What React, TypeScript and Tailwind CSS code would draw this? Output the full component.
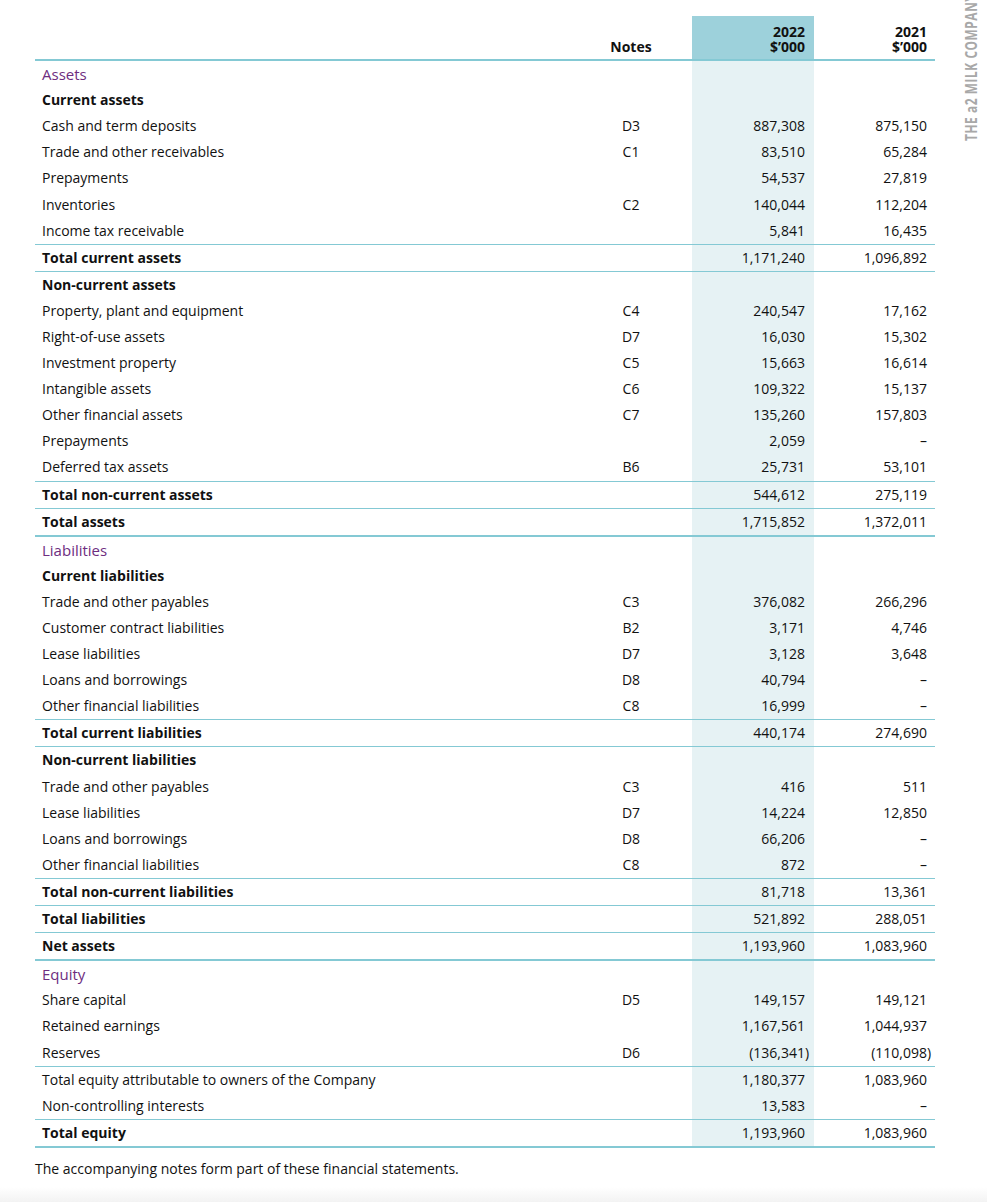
import React from "react";

type Row = {
  l: string;
  t?: "sec" | "bold";
  n?: string;
  a?: string;
  b?: string;
  line?: 0 | 1 | 2;
};

const rows: Row[] = [
  { l: "Assets", t: "sec" },
  { l: "Current assets", t: "bold" },
  { l: "Cash and term deposits", n: "D3", a: "887,308", b: "875,150" },
  { l: "Trade and other receivables", n: "C1", a: "83,510", b: "65,284" },
  { l: "Prepayments", a: "54,537", b: "27,819" },
  { l: "Inventories", n: "C2", a: "140,044", b: "112,204" },
  { l: "Income tax receivable", a: "5,841", b: "16,435", line: 1 },
  { l: "Total current assets", t: "bold", a: "1,171,240", b: "1,096,892", line: 1 },
  { l: "Non-current assets", t: "bold" },
  { l: "Property, plant and equipment", n: "C4", a: "240,547", b: "17,162" },
  { l: "Right-of-use assets", n: "D7", a: "16,030", b: "15,302" },
  { l: "Investment property", n: "C5", a: "15,663", b: "16,614" },
  { l: "Intangible assets", n: "C6", a: "109,322", b: "15,137" },
  { l: "Other financial assets", n: "C7", a: "135,260", b: "157,803" },
  { l: "Prepayments", a: "2,059", b: "–" },
  { l: "Deferred tax assets", n: "B6", a: "25,731", b: "53,101", line: 1 },
  { l: "Total non-current assets", t: "bold", a: "544,612", b: "275,119", line: 1 },
  { l: "Total assets", t: "bold", a: "1,715,852", b: "1,372,011", line: 2 },
  { l: "Liabilities", t: "sec" },
  { l: "Current liabilities", t: "bold" },
  { l: "Trade and other payables", n: "C3", a: "376,082", b: "266,296" },
  { l: "Customer contract liabilities", n: "B2", a: "3,171", b: "4,746" },
  { l: "Lease liabilities", n: "D7", a: "3,128", b: "3,648" },
  { l: "Loans and borrowings", n: "D8", a: "40,794", b: "–" },
  { l: "Other financial liabilities", n: "C8", a: "16,999", b: "–", line: 1 },
  { l: "Total current liabilities", t: "bold", a: "440,174", b: "274,690", line: 1 },
  { l: "Non-current liabilities", t: "bold" },
  { l: "Trade and other payables", n: "C3", a: "416", b: "511" },
  { l: "Lease liabilities", n: "D7", a: "14,224", b: "12,850" },
  { l: "Loans and borrowings", n: "D8", a: "66,206", b: "–" },
  { l: "Other financial liabilities", n: "C8", a: "872", b: "–", line: 1 },
  { l: "Total non-current liabilities", t: "bold", a: "81,718", b: "13,361", line: 1 },
  { l: "Total liabilities", t: "bold", a: "521,892", b: "288,051", line: 1 },
  { l: "Net assets", t: "bold", a: "1,193,960", b: "1,083,960", line: 2 },
  { l: "Equity", t: "sec" },
  { l: "Share capital", n: "D5", a: "149,157", b: "149,121" },
  { l: "Retained earnings", a: "1,167,561", b: "1,044,937" },
  { l: "Reserves", n: "D6", a: "(136,341)", b: "(110,098)", line: 1 },
  { l: "Total equity attributable to owners of the Company", a: "1,180,377", b: "1,083,960" },
  { l: "Non-controlling interests", a: "13,583", b: "–", line: 1 },
  { l: "Total equity", t: "bold", a: "1,193,960", b: "1,083,960", line: 2 },
];

function Num({ v }: { v?: string }) {
  if (!v) return null;
  if (v.endsWith(")")) {
    return (
      <>
        {v.slice(0, -1)}
        <span className="inline-block w-0">)</span>
      </>
    );
  }
  return <>{v}</>;
}

function lineClass(line?: number) {
  if (line === 1) return "border-b border-[#84c9d4]";
  if (line === 2) return "border-b-2 border-[#84c9d4]";
  return "";
}

function labelClass(t?: string) {
  if (t === "sec") return "text-[15px] text-[#6e2d80]";
  if (t === "bold") return "font-bold text-[14px] text-[#111]";
  return "text-[14px] text-[#111]";
}

export default function App() {
  return (
    <div
      className="relative flex min-h-[1202px] w-full flex-col overflow-hidden bg-white"
      style={{ fontFamily: '"Open Sans", "Noto Sans", sans-serif' }}
    >
      <div className="absolute left-[964px] top-[141px] origin-top-left whitespace-nowrap text-[16px] font-bold leading-[14px] tracking-[0.8px] text-[#a8a8a8] [transform:rotate(-90deg)_scaleX(0.74)]">
        THE a2 MILK COMPANY LIMITED
      </div>

      <div className="ml-[35px] mt-[16px] w-[900px]">
        {/* header */}
        <div className="grid h-[45px] grid-cols-[545px_102px_10px_122px_121px] border-b-2 border-[#84c9d4] text-[14px] font-bold leading-[15px] text-[#111]">
          <div />
          <div className="flex items-end justify-center pb-[5px]">Notes</div>
          <div />
          <div className="flex flex-col items-end justify-end bg-[#9dd1db] pb-[5px] pr-[9px]">
            <span>2022</span>
            <span>$’000</span>
          </div>
          <div className="flex flex-col items-end justify-end pb-[5px] pr-[8px]">
            <span>2021</span>
            <span>$’000</span>
          </div>
        </div>

        {rows.map((r, i) => (
          <div
            key={i}
            className={`box-content grid h-[26.1px] grid-cols-[545px_102px_10px_122px_121px] items-center leading-[20px] ${lineClass(r.line)}`}
          >
            <div className={`pl-[7px] ${labelClass(r.t)}`}>{r.l}</div>
            <div className="text-center text-[14px] text-[#111]">{r.n ?? ""}</div>
            <div />
            <div className="flex h-full items-center justify-end bg-[#e6f2f4] pr-[9px] text-[14px] text-[#111]">
              <span>
                <Num v={r.a} />
              </span>
            </div>
            <div className="pr-[8px] text-right text-[14px] text-[#111]">
              <Num v={r.b} />
            </div>
          </div>
        ))}
      </div>

      <div className="ml-[35px] mt-[11px] text-[14px] leading-[20px] text-[#111]">
        The accompanying notes form part of these financial statements.
      </div>

      <div className="mt-[8px] flex-1 bg-gradient-to-b from-white to-[#f3f3f3]" />
    </div>
  );
}
